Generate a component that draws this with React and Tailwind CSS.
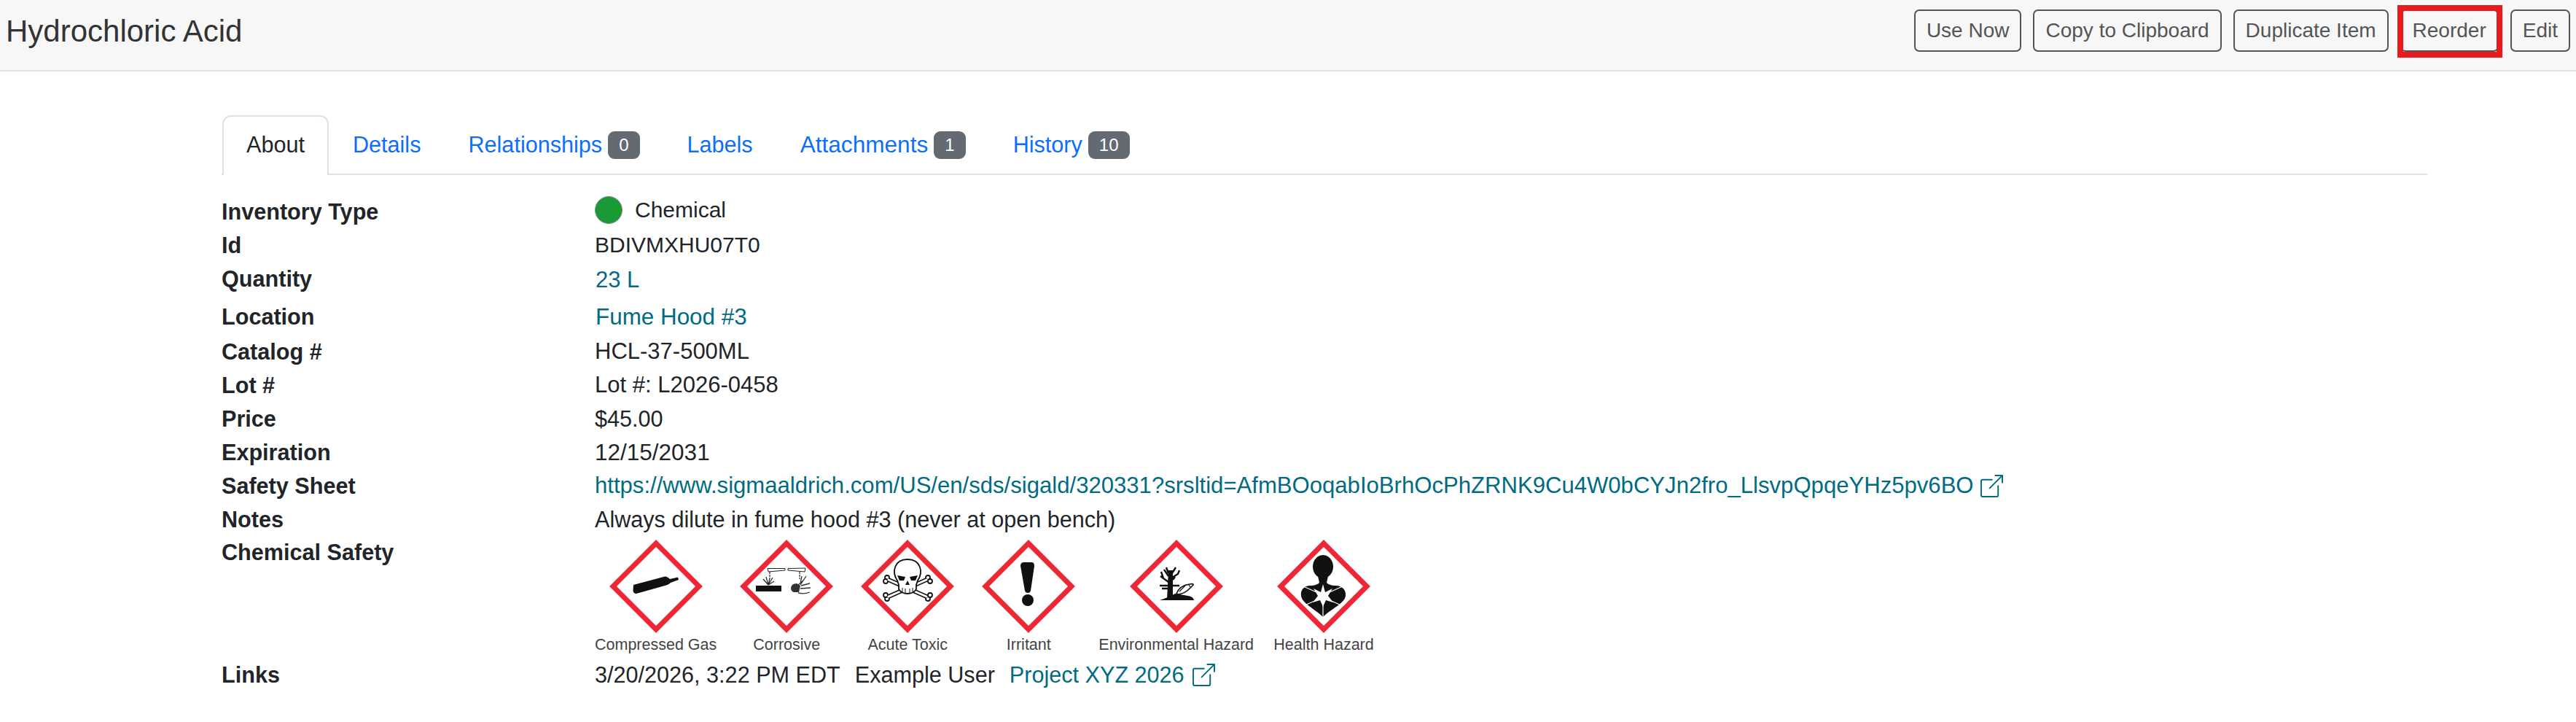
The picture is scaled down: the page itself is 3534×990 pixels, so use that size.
import { BsBoxArrowUpRight } from "react-icons/bs";

const font = { fontFamily: '"Liberation Sans", Arial, sans-serif' };

function Diamond({ children }) {
  return (
    <svg viewBox="-6 -6 140 140" className="w-[140px] h-[140px] block">
      <polygon
        points="64,5 123,64 64,123 5,64"
        fill="#fff"
        stroke="#ee2737"
        strokeWidth="7"
        strokeMiterlimit="10"
      />
      {children}
    </svg>
  );
}

function GasIcon() {
  return (
    <Diamond>
      <path d="M33 62 L76 50.5 Q79 50 83 54 L94 51.5 L95 55 L84 59 Q81 62 78 62.5 L37 74 Q33 74 32.500 70 Z" fill="#111" />
    </Diamond>
  );
}

function CorrosiveIcon() {
  return (
    <Diamond>
      <path d="M38 39.500 L62 39.500 L62 42 L39 44 Z M66 39.500 L90 39 L89 44 L66 42 Z" fill="#fff" stroke="#222" strokeWidth="1" />
      <path d="M41 44 L41 53 M82 44 L82 54" stroke="#222" strokeWidth="1.200" strokeDasharray="3 1" fill="none" />
      <rect x="22" y="63" width="35" height="8" fill="#111" />
      <path d="M39 62 L32 54 M39 62 L36 51 M39 62 L41 53 M39 62 L45 52 M39 62 L47 57" stroke="#222" strokeWidth="1.200" fill="none" />
      <path d="M70 66 Q71 60 78 60 L83 63 L81 72 L74 72 Q70 71 70 66 Z" fill="#333" />
      <path d="M80 62 L88 55 M83 60 L85 50 M83 62 L91 50 M84 63 L96 60 M83 67 L97 66 M80 73 Q88 75 96 72" stroke="#333" strokeWidth="1.300" fill="none" />
    </Diamond>
  );
}

function ToxicIcon() {
  return (
    <Diamond>
      <g stroke="#111" strokeLinecap="round" fill="none">
        <path d="M38 55 L90 78 M90 55 L38 78" strokeWidth="6" />
        <circle cx="36" cy="52" r="3" strokeWidth="1.800" fill="#fff" />
        <circle cx="34" cy="57" r="3" strokeWidth="1.800" fill="#fff" />
        <circle cx="92" cy="52" r="3" strokeWidth="1.800" fill="#fff" />
        <circle cx="95" cy="57" r="3" strokeWidth="1.800" fill="#fff" />
        <circle cx="36" cy="81" r="3" strokeWidth="1.800" fill="#fff" />
        <circle cx="34" cy="76" r="3" strokeWidth="1.800" fill="#fff" />
        <circle cx="92" cy="81" r="3" strokeWidth="1.800" fill="#fff" />
        <circle cx="95" cy="76" r="3" strokeWidth="1.800" fill="#fff" />
        <path d="M38 55 L90 78 M90 55 L38 78" strokeWidth="3" stroke="#fff" />
      </g>
      <path
        d="M50 56 C42 44 46 27 64 27 C82 27 86 44 78 56 L76 62 L76 68 Q72 74 64 74 Q56 74 52 68 L52 62 Z"
        fill="#fff"
        stroke="#111"
        strokeWidth="1.800"
      />
      <path d="M50 49 L61 51 L59 56 L53 56 Z M78 49 L67 51 L69 56 L75 56 Z M64 56 L67 62 L61 62 Z" fill="#111" />
      <path d="M57 66 L57 72 M61 67 L61 73 M67 67 L67 73 M71 66 L71 72" stroke="#111" strokeWidth="1" />
    </Diamond>
  );
}

function IrritantIcon() {
  return (
    <Diamond>
      <path d="M53 36 Q53 31 58 31 L68 31 Q72 31 72 36 L67 70 Q66 73 63 73 Q60 73 59 70 Z" fill="#111" />
      <circle cx="63" cy="83" r="8" fill="#111" />
    </Diamond>
  );
}

function EnvIcon() {
  return (
    <Diamond>
      <path d="M51 82 L53 42 L59 42 L59 82 Z" fill="#111" />
      <path
        d="M53 58 L46 53 L43 44 M46 53 L42 50 M53 50 L47 41 M53 46 L50 38 M58 52 L66 47 L68 42 M58 46 L63 38 M59 55 L62 51 M41 63 L68 63 M44 67 L57 67"
        stroke="#111"
        strokeWidth="2.400"
        fill="none"
      />
      <path d="M41 83 Q56 78 62 74 L80 77 Q87 78 88 83 Z" fill="#111" />
      <path d="M64 74 Q68 63 82 61 Q88 60 87 62 L83 66 Q76 74 66 75 Z" fill="#fff" stroke="#111" strokeWidth="1.600" />
      <path d="M68 71 L76 63 M80 61 L84 66" stroke="#111" strokeWidth="1.200" />
    </Diamond>
  );
}

function HealthIcon() {
  return (
    <Diamond>
      <path
        d="M56 50 L58 59 Q55 62 48 63 C36 62 32 70 33 77 C34 87 52 95 63 106 C74 95 93 87 94 77 C95 70 90 62 78 63 Q71 62 68 59 L70 50 Z"
        fill="#111"
      />
      <ellipse cx="63" cy="37" rx="14" ry="16" fill="#111" />
      <path
        d="M63 61 L66 72 L76 67 L70 77 L77 86 L67 83 L63 92 L59 83 L49 86 L56 77 L50 67 L60 72 Z"
        fill="#fff"
      />
      <path d="M63 90 L63 106 M72 72 L90 64 M54 72 L36 64 M70 82 L88 90 M56 82 L38 90" stroke="#fff" strokeWidth="1.200" />
    </Diamond>
  );
}

const hazards = [
  { label: "Compressed Gas", Icon: GasIcon },
  { label: "Corrosive", Icon: CorrosiveIcon },
  { label: "Acute Toxic", Icon: ToxicIcon },
  { label: "Irritant", Icon: IrritantIcon },
  { label: "Environmental Hazard", Icon: EnvIcon },
  { label: "Health Hazard", Icon: HealthIcon },
];

function Btn({ children }) {
  return (
    <button className="h-[58px] px-[15px] border-2 border-[#555] rounded-[7px] text-[28px] leading-none text-[#555] bg-transparent">
      {children}
    </button>
  );
}

function Badge({ children }) {
  return (
    <span className="ml-[8px] h-[38px] px-[15px] inline-flex items-center rounded-[9px] bg-[#636a72] text-white text-[24px] leading-none">
      {children}
    </span>
  );
}

function Tab({ children, badge }) {
  return (
    <a className="flex items-center h-[80px] pt-[2px] px-[32px] mr-[1px] text-[#0d6efd]">
      {children}
      {badge && <Badge>{badge}</Badge>}
    </a>
  );
}

function Row({ label, className, children }) {
  return (
    <div className={`grid grid-cols-[512px_1fr] leading-[46px] ${className}`}>
      <div className="font-bold text-[#212529]">{label}</div>
      {children}
    </div>
  );
}

export default function App() {
  return (
    <div style={font} className="min-h-[990px] bg-white text-[30.6px] text-[#212529]">
      <header className="h-[98px] pb-[12px] flex items-center justify-between pl-[8px] pr-[8px] bg-[#f7f7f7] border-b-2 border-[#e4e4e4]">
        <h1 className="text-[42px] text-[#333] font-normal">Hydrochloric Acid</h1>
        <div className="flex gap-[16px]">
          <Btn>Use Now</Btn>
          <Btn>Copy to Clipboard</Btn>
          <Btn>Duplicate Item</Btn>
          <div className="relative">
            <Btn>Reorder</Btn>
            <div className="absolute -left-[4px] -right-[5px] -top-[6px] -bottom-[8px] border-[8px] border-[#e81c1c]"></div>
          </div>
          <Btn>Edit</Btn>
        </div>
      </header>

      <main className="ml-[304px] w-[3026px] pt-[60px]">
        <nav className="flex border-b-2 border-[#dee2e6] h-[82px]">
          <a className="flex items-center h-[82px] pb-[3px] px-[31px] mr-[1px] ml-[1px] text-[#212529] bg-white border-2 border-b-0 border-[#dee2e6] rounded-t-[12px]">
            About
          </a>
          <Tab>Details</Tab>
          <Tab badge="0">Relationships</Tab>
          <Tab>Labels</Tab>
          <Tab badge="1">
            <span className="text-[31.6px]">Attachments</span>
          </Tab>
          <Tab badge="10">History</Tab>
        </nav>

        <div className="pt-[27px]">
          <Row label="Inventory Type" className="h-[46px]">
            <div className="flex items-center gap-[17px] -mt-[4px] text-[30px]">
              <span className="w-[38px] h-[38px] rounded-full bg-[#1a9a35] border border-[#888]"></span>
              <span>Chemical</span>
            </div>
          </Row>
          <Row label="Id" className="h-[46px]">
            <div className="text-[30px]">BDIVMXHU07T0</div>
          </Row>
          <Row label="Quantity" className="h-[52px]">
            <div className="pt-[2px] pl-[1px] text-[31px] text-[#006b82]">23 L</div>
          </Row>
          <Row label="Location" className="h-[48px]">
            <div className="pt-[1px] pl-[1px] text-[31.4px] text-[#006b82]">Fume Hood #3</div>
          </Row>
          <Row label="Catalog #" className="h-[46px]">
            <div className="text-[31px]">HCL-37-500ML</div>
          </Row>
          <Row label="Lot #" className="h-[46px]">
            <div className="text-[31px]">Lot #: L2026-0458</div>
          </Row>
          <Row label="Price" className="h-[46px]">
            <div>$45.00</div>
          </Row>
          <Row label="Expiration" className="h-[46px]">
            <div className="text-[31.5px]">12/15/2031</div>
          </Row>
          <Row label="Safety Sheet" className="h-[46px]">
            <div className="flex items-center gap-[9px] text-[31.1px] text-[#006b82]">
              <span>https://www.sigmaaldrich.com/US/en/sds/sigald/320331?srsltid=AfmBOoqabIoBrhOcPhZRNK9Cu4W0bCYJn2fro_LlsvpQpqeYHz5pv6BO</span>
              <BsBoxArrowUpRight className="w-[31px] h-[31px]" />
            </div>
          </Row>
          <Row label="Notes" className="h-[45px]">
            <div>Always dilute in fume hood #3 (never at open bench)</div>
          </Row>
          <Row label="Chemical Safety" className="h-[168px]">
            <div className="flex gap-[26px] items-start">
              {hazards.map(({ label, Icon }) => (
                <div key={label} className="flex flex-col items-center">
                  <Icon />
                  <span className="text-[21.5px] leading-[20px] text-[#444]">{label}</span>
                </div>
              ))}
            </div>
          </Row>
          <Row label="Links" className="h-[46px]">
            <div className="flex items-center gap-[20px]">
              <span>3/20/2026, 3:22 PM EDT</span>
              <span>Example User</span>
              <span className="flex items-center gap-[11px] text-[#006b82]">
                Project XYZ 2026
                <BsBoxArrowUpRight className="w-[31px] h-[31px]" />
              </span>
            </div>
          </Row>
        </div>
      </main>
    </div>
  );
}
